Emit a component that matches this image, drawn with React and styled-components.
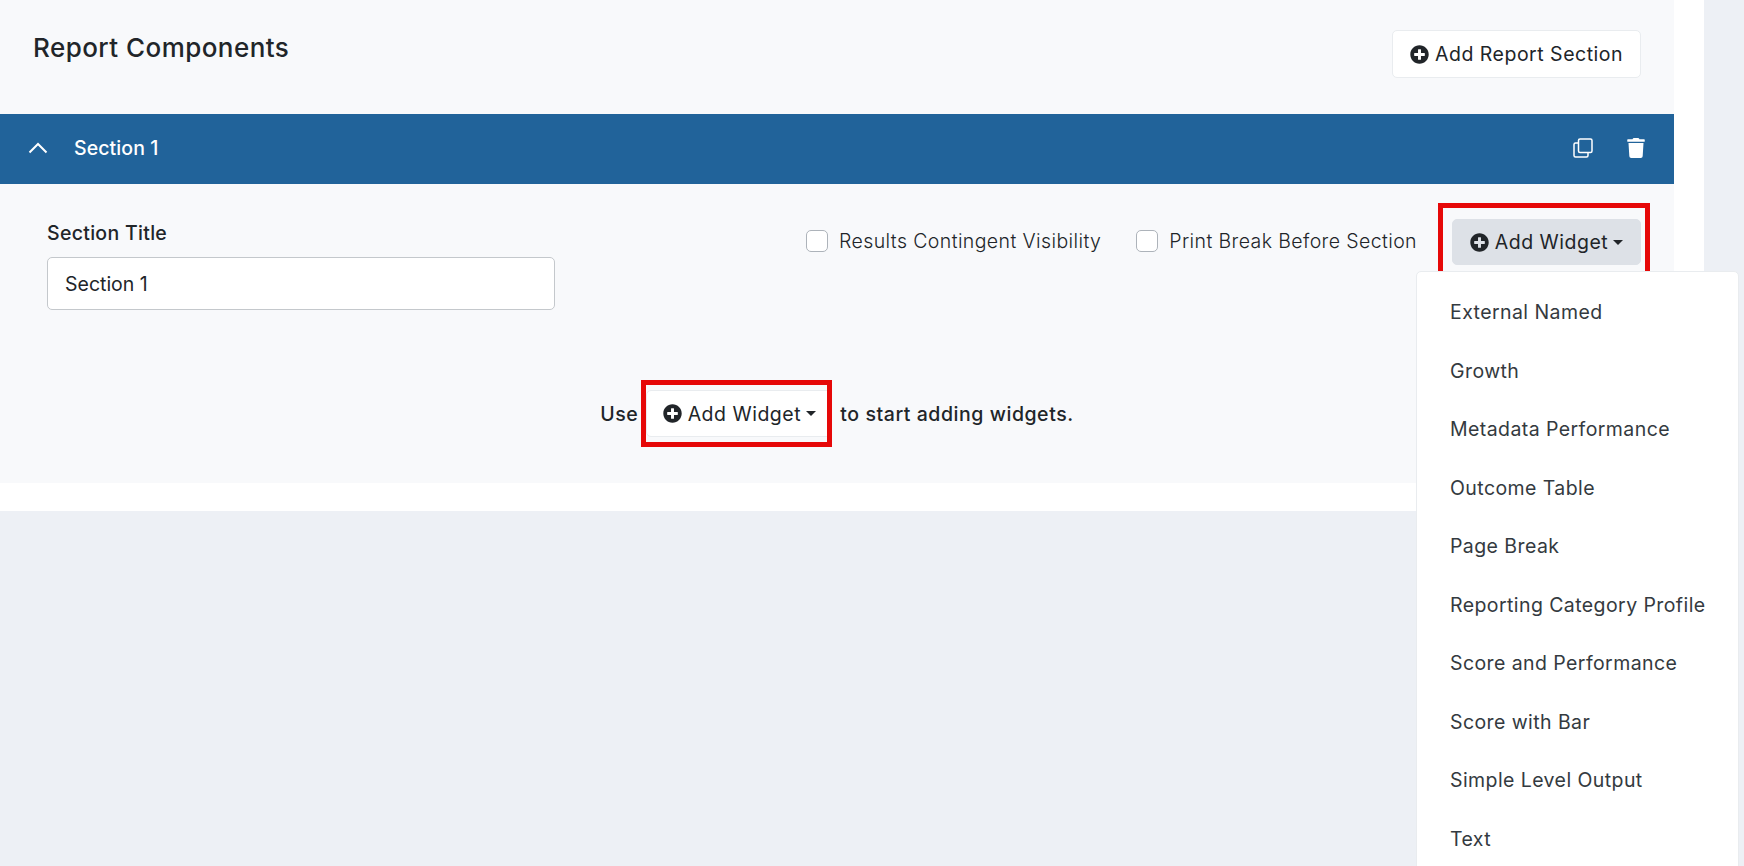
import styled, { createGlobalStyle } from 'styled-components';
import { FaPlusCircle, FaTrash } from 'react-icons/fa';

const GlobalStyle = createGlobalStyle`
   html, body {
      margin: 0;
      height: 100%;
      overflow: hidden;
      background: #edf0f5;
      color: #212529;
      font-family: Inter, "Open Sans", sans-serif;
   }
`;
const Page = styled.div`
   position: relative;
   height: 866px;
   overflow: hidden;
`;
const Sheet = styled.div`
   width: 1704px;
   height: 511px;
   background: #ffffff;
`;
const Panel = styled.div`
   width: 1674px;
   height: 483px;
   background: #f8f9fb;
`;
const TopRow = styled.div`
   height: 114px;
   box-sizing: border-box;
   padding: 30px 33px 0;
   display: flex;
   justify-content: space-between;
   align-items: flex-start;
`;
const Title = styled.h2`
   margin: 0;
   font-size: 26px;
   line-height: 36px;
   font-weight: 500;
   letter-spacing: 0.45px;
`;
const Button = styled.button`
   display: inline-flex;
   align-items: center;
   gap: 6px;
   box-sizing: border-box;
   height: ${(p) => p.$height || 48}px;
   width: ${(p) => p.$width}px;
   justify-content: center;
   background: ${(p) => (p.$active ? '#dde1e7' : '#ffffff')};
   border: 1px solid ${(p) => (p.$active ? '#dde1e7' : '#e9ecef')};
   border-radius: 5px;
   color: #212529;
   font-family: inherit;
   font-size: 19.5px;
   font-weight: 400;
   letter-spacing: 0.5px;
   padding: 0;
   & svg {
      width: 19px;
      height: 19px;
      flex: none;
   }
`;
const Caret = styled.span`
   width: 0;
   height: 0;
   margin-left: -1px;
   border-top: 5px solid #212529;
   border-left: 5px solid transparent;
   border-right: 5px solid transparent;
`;
const SectionBar = styled.div`
   height: 70px;
   box-sizing: border-box;
   padding: 0 28px 2px 28px;
   background: #21639a;
   color: #ffffff;
   display: flex;
   align-items: center;
`;
const SectionName = styled.div`
   margin-left: 26px;
   font-size: 19.5px;
   font-weight: 500;
   letter-spacing: 0.1px;
`;
const BarActions = styled.div`
   margin-left: auto;
   display: flex;
   align-items: center;
   gap: 33px;
   & svg {
      display: block;
   }
`;
const SectionRow = styled.div`
   display: flex;
   justify-content: space-between;
   padding: 35px 33px 0 47px;
`;
const Field = styled.div`
   width: 508px;
   margin-top: 1px;
`;
const Label = styled.div`
   font-size: 19.5px;
   line-height: 26px;
   font-weight: 500;
   letter-spacing: 0.3px;
   margin-bottom: 11px;
`;
const Input = styled.div`
   height: 53px;
   box-sizing: border-box;
   padding: 0 17px;
   display: flex;
   align-items: center;
   background: #ffffff;
   border: 1px solid #c4c8cc;
   border-radius: 5px;
   font-size: 19.5px;
`;
const Options = styled.div`
   display: flex;
   align-items: center;
   height: 46px;
`;
const Check = styled.label`
   display: flex;
   align-items: center;
   gap: 11px;
   margin-top: -2px;
   margin-right: 35px;
   font-size: 19.5px;
   font-weight: 300;
   letter-spacing: 0.4px;
   & span {
      width: 22px;
      height: 22px;
      box-sizing: border-box;
      background: #ffffff;
      border: 1px solid #adb3ba;
      border-radius: 5px;
   }
`;
const Highlight = styled.span`
   position: relative;
   display: inline-flex;
   &::after {
      content: '';
      position: absolute;
      top: ${(p) => p.$top}px;
      bottom: ${(p) => p.$bottom}px;
      left: ${(p) => p.$left}px;
      right: ${(p) => p.$right}px;
      border: 5px solid #e60808;
   }
`;
const Hint = styled.div`
   margin-top: 80px;
   display: flex;
   align-items: center;
   justify-content: center;
   gap: 8px;
   font-size: 19.5px;
   font-weight: 500;
   letter-spacing: 0.55px;
`;
const Menu = styled.ul`
   position: absolute;
   left: 1416px;
   top: 271px;
   width: 323px;
   margin: 0;
   padding: 11px 0 0;
   list-style: none;
   background: #ffffff;
   border: 1px solid #e9ecef;
   border-radius: 5px;
   height: 640px;
   box-sizing: border-box;
`;
const MenuItem = styled.li`
   height: 58.5px;
   padding-left: 33px;
   display: flex;
   align-items: center;
   font-size: 19.5px;
   letter-spacing: 0.42px;
   color: #343a40;
`;

const widgets = [
   'External Named',
   'Growth',
   'Metadata Performance',
   'Outcome Table',
   'Page Break',
   'Reporting Category Profile',
   'Score and Performance',
   'Score with Bar',
   'Simple Level Output',
   'Text',
];

const ChevronUp = () => (
   <svg width='20' height='12' viewBox='0 0 20 12' fill='none' stroke='#fff' strokeWidth='2'>
      <path d='M1.500 10.500L10 2l8.500 8.500' />
   </svg>
);

const CopyIcon = () => (
   <svg width='20' height='20' viewBox='0 0 20 20' fill='none' stroke='#fff' strokeWidth='1.5'>
      <rect x='5.500' y='1' width='13.500' height='13.500' rx='1.500' />
      <path d='M5.500 5H2.500A1.500 1.500 0 0 0 1 6.500V17.500A1.500 1.500 0 0 0 2.500 19H13.500A1.500 1.500 0 0 0 15 17.500V14.500' />
   </svg>
);

const App = () => (
   <Page>
      <GlobalStyle />
      <Sheet>
         <Panel>
            <TopRow>
               <Title>Report Components</Title>
               <Button $width={249}>
                  <FaPlusCircle />
                  Add Report Section
               </Button>
            </TopRow>
            <SectionBar>
               <ChevronUp />
               <SectionName>Section 1</SectionName>
               <BarActions>
                  <CopyIcon />
                  <FaTrash size={20} />
               </BarActions>
            </SectionBar>
            <SectionRow>
               <Field>
                  <Label>Section Title</Label>
                  <Input>Section 1</Input>
               </Field>
               <Options>
                  <Check>
                     <span />
                     Results Contingent Visibility
                  </Check>
                  <Check>
                     <span />
                     Print Break Before Section
                  </Check>
                  <Highlight $top={-16} $bottom={-13} $left={-14} $right={-9}>
                     <Button $active $width={189} $height={46}>
                        <FaPlusCircle />
                        Add Widget
                        <Caret />
                     </Button>
                  </Highlight>
               </Options>
            </SectionRow>
            <Hint>
               Use
               <Highlight $top={-10} $bottom={-10} $left={-5} $right={0}>
                  <Button $width={186} $height={47}>
                     <FaPlusCircle />
                     Add Widget
                     <Caret />
                  </Button>
               </Highlight>
               to start adding widgets.
            </Hint>
         </Panel>
      </Sheet>
      <Menu>
         {widgets.map((name) => (
            <MenuItem key={name}>{name}</MenuItem>
         ))}
      </Menu>
   </Page>
);

export default App;
